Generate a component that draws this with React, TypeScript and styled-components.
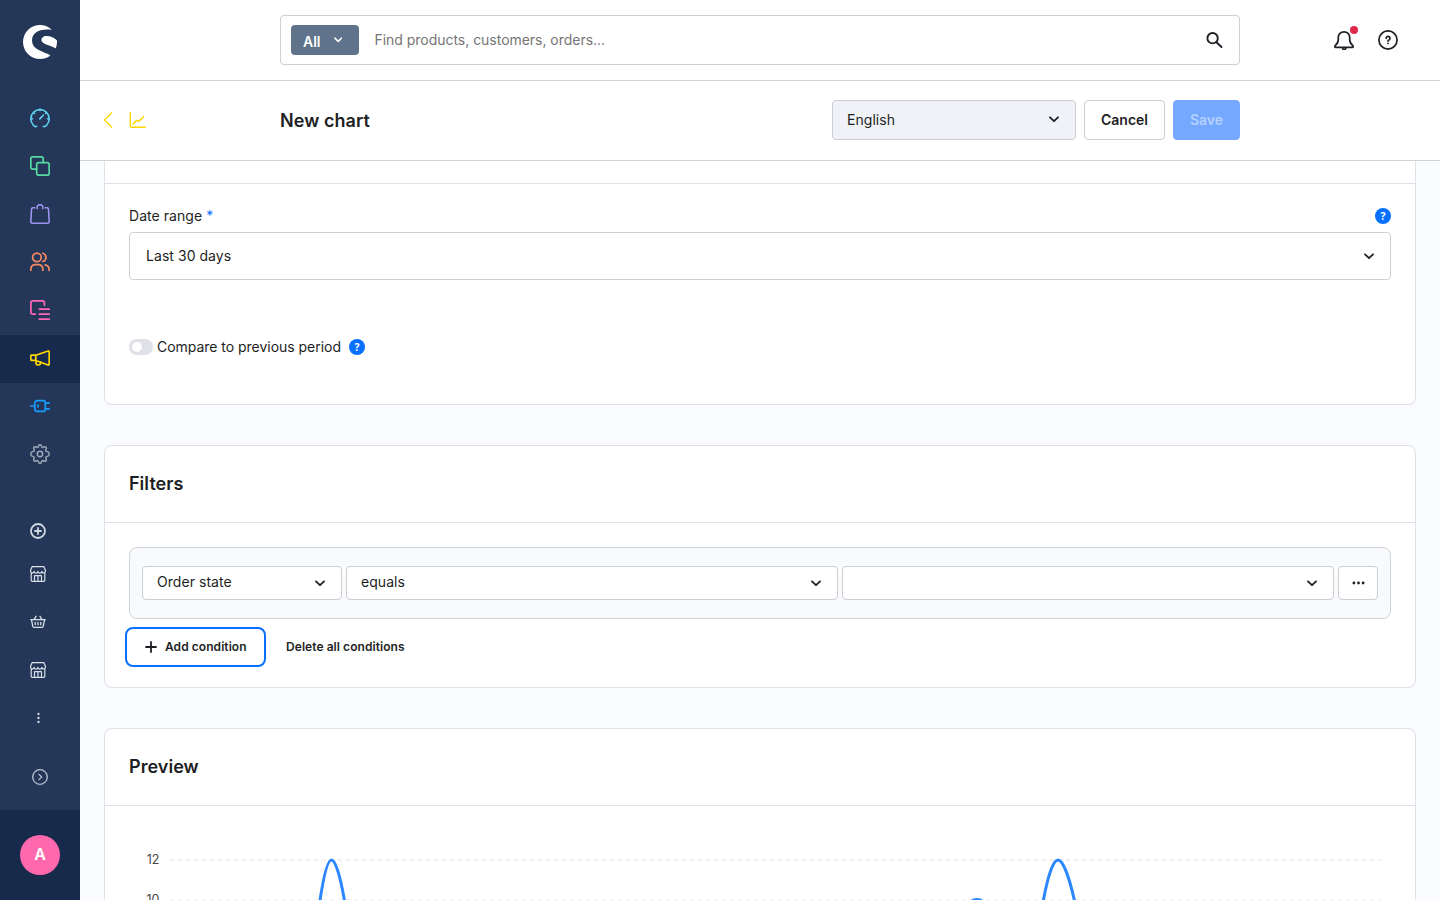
import React from "react";
import styled, { createGlobalStyle, css } from "styled-components";
import { SiShopware } from "react-icons/si";

const GlobalStyle = createGlobalStyle`
  *, *::before, *::after { box-sizing: border-box; }
  body { margin: 0; overflow: hidden; font-family: Inter, "Liberation Sans", sans-serif; color: #1e1f24; }
  button, input { font: inherit; color: inherit; }
  svg { display: block; flex: none; }
`;

const Layout = styled.div`
  display: flex;
  height: 900px;
  width: 1440px;
  background: #fafbff;
`;

const Sidebar = styled.aside`
  display: flex;
  flex-direction: column;
  width: 80px;
  height: 100%;
  background: #243758;
`;

const Logo = styled.div`
  display: flex;
  justify-content: center;
  height: 94px;
  padding-top: 25px;
  color: #fff;
`;

const NavList = styled.nav`
  display: flex;
  flex-direction: column;
  height: 427px;
  padding-top: 1px;
`;

const NavItem = styled.a<{ $color: string; $active?: boolean }>`
  display: flex;
  align-items: center;
  height: 48px;
  padding: 0 0 2px 30px;
  color: ${(p) => p.$color};
  background: ${(p) => (p.$active ? "#172a4c" : "transparent")};
`;

const ChannelList = styled.div`
  display: flex;
  flex-direction: column;
  height: 289px;
  padding-top: 2px;
`;

const ChannelHead = styled.div`
  height: 43px;
  padding-left: 30px;
  color: #d0d8e2;
`;

const Channel = styled.a`
  height: 48px;
  padding-left: 30px;
  color: #d9dfe8;
`;

const Collapse = styled.div`
  padding: 11px 0 0 32px;
  color: #b9c4d2;
`;

const UserArea = styled.div`
  display: flex;
  flex: 1;
  align-items: center;
  justify-content: center;
  background: #172a4c;
`;

const Avatar = styled.div`
  display: flex;
  align-items: center;
  justify-content: center;
  width: 40px;
  height: 40px;
  padding-bottom: 2px;
  border-radius: 50%;
  background: #ff68ac;
  color: #fff;
  font-size: 16px;
  font-weight: 600;
`;

const Main = styled.main`
  display: flex;
  flex: 1;
  flex-direction: column;
  min-width: 0;
`;

const TopBar = styled.header`
  display: flex;
  justify-content: space-between;
  height: 81px;
  padding: 15px 42px 0 200px;
  border-bottom: 1px solid #d1d1d8;
  background: #fff;
`;

const Search = styled.div`
  display: flex;
  align-items: center;
  width: 960px;
  height: 50px;
  padding: 0 16px 0 10px;
  border: 1px solid #cdced6;
  border-radius: 4px;
`;

const SearchType = styled.button`
  display: flex;
  align-items: center;
  justify-content: space-between;
  width: 68px;
  height: 30px;
  margin: 0 15.5px 0 0;
  padding: 0 17px 0 12px;
  border: 0;
  border-radius: 4px;
  background: #5f738b;
  color: #fff;
  font-size: 14px;
  font-weight: 600;
  & > span { padding-top: 2px; }
`;

const SearchInput = styled.input`
  flex: 1;
  padding: 0 0 2px;
  border: 0;
  outline: 0;
  background: none;
  font-size: 14px;
  letter-spacing: -0.03px;
  &::placeholder { color: #757575; opacity: 1; }
`;

const TopActions = styled.div`
  display: flex;
  gap: 24px;
  align-items: center;
  height: 50px;
`;

const Bell = styled.div`
  position: relative;
`;

const BellDot = styled.span`
  position: absolute;
  top: -4px;
  right: -4px;
  width: 8px;
  height: 8px;
  border-radius: 50%;
  background: #de294c;
`;

const PageHeader = styled.div`
  display: flex;
  align-items: center;
  height: 80px;
  padding: 0 200px 2px 23px;
  border-bottom: 1px solid #d1d1d8;
  background: #fff;
`;

const BackNav = styled.div`
  display: flex;
  width: 177px;
  gap: 16px;
  color: #ffd700;
`;

const PageTitle = styled.h1`
  flex: 1;
  margin: 0;
  padding-top: 2px;
  font-size: 18px;
  font-weight: 600;
  letter-spacing: 0.06px;
`;

const Button = styled.button<{ $width: number; $primary?: boolean }>`
  width: ${(p) => p.$width}px;
  height: 40px;
  margin-left: 8px;
  padding: 0;
  border: 1px solid #cdced6;
  border-radius: 4px;
  background: #fff;
  font-size: 14px;
  font-weight: 600;
  ${(p) => p.$primary && css`
    border-color: #75a8ff;
    background: #75a8ff;
    color: #b5d1ff;
  `}
`;

const SelectBox = styled.div<{ $width?: number; $height: number; $muted?: boolean; $inset?: number; $lift?: number }>`
  display: flex;
  align-items: center;
  justify-content: space-between;
  ${(p) => (p.$width ? css`width: ${p.$width}px;` : css`flex: 1;`)}
  height: ${(p) => p.$height}px;
  padding: 0 16px 0 ${(p) => p.$inset ?? 14}px;
  border: 1px solid #cdced6;
  border-radius: 4px;
  background: ${(p) => (p.$muted ? "#f0f2f8" : "#fff")};
  font-size: 14px;
  letter-spacing: 0.05px;
  & > span { padding-bottom: ${(p) => p.$lift ?? 0}px; }
`;

const Content = styled.div`
  display: flex;
  flex: 1;
  flex-direction: column;
  gap: 40px;
  min-height: 0;
  padding: 0 24px;
  overflow: hidden;
`;

const Card = styled.section<{ $height: number; $scrolled?: boolean }>`
  display: flex;
  flex: none;
  flex-direction: column;
  height: ${(p) => p.$height}px;
  border: 1px solid #e0e1e8;
  border-radius: 8px;
  background: #fff;
  ${(p) => p.$scrolled && css`
    border-top: 0;
    border-top-left-radius: 0;
    border-top-right-radius: 0;
  `}
`;

const CardHeader = styled.h2`
  height: 77px;
  margin: 0;
  padding: 26px 24px 0;
  border-bottom: 1px solid #e0e1e8;
  font-size: 18px;
  font-weight: 600;
  line-height: 24px;
  letter-spacing: 0.04px;
`;

const CardHeaderTail = styled.div`
  height: 23px;
  border-bottom: 1px solid #e0e1e8;
`;

const CardBody = styled.div`
  display: flex;
  flex-direction: column;
  padding: 24px 24px 0;
`;

const FieldHead = styled.div`
  display: flex;
  align-items: center;
  justify-content: space-between;
  height: 16px;
  margin-bottom: 8px;
  font-size: 14px;
`;

const FieldLabel = styled.span`
  padding-bottom: 1px;
  letter-spacing: 0.05px;
`;

const Required = styled.span`
  color: #0870ff;
`;

const Help = styled.span`
  display: flex;
  align-items: center;
  justify-content: center;
  width: 16px;
  height: 16px;
  border-radius: 50%;
  background: #0870ff;
  color: #fff;
  font-size: 10.5px;
  font-family: "Open Sans", sans-serif;
  font-weight: 700;
`;

const FieldRow = styled.div`
  display: flex;
`;

const SwitchRow = styled.div`
  display: flex;
  align-items: center;
  height: 16px;
  margin-top: 59px;
  font-size: 14px;
`;

const SwitchTrack = styled.span`
  display: flex;
  align-items: center;
  width: 24px;
  height: 16px;
  margin-right: 4px;
  padding-left: 3px;
  border-radius: 8px;
  background: #e0e1e8;
  &::before { content: ""; width: 10px; height: 10px; border-radius: 50%; background: #fff; }
`;

const SwitchLabel = styled.span`
  width: 184px;
  margin-right: 8px;
  padding-bottom: 1px;
  letter-spacing: -0.03px;
  white-space: nowrap;
`;

const ConditionBox = styled.div`
  display: flex;
  gap: 4px;
  align-items: center;
  height: 72px;
  padding: 0 12px;
  border: 1px solid #cfd3da;
  border-radius: 8px;
  background: #f9fafc;
`;

const MoreButton = styled.button`
  display: flex;
  align-items: center;
  justify-content: center;
  width: 40px;
  height: 34px;
  padding: 0;
  border: 1px solid #cdced6;
  border-radius: 4px;
  background: #fff;
`;

const ConditionActions = styled.div`
  display: flex;
  gap: 20px;
  margin: 8px 0 0 -4px;
`;

const TextButton = styled.button<{ $focused?: boolean }>`
  display: flex;
  align-items: center;
  gap: 8px;
  height: 40px;
  padding: 0;
  border: 0;
  border-radius: 8px;
  background: none;
  font-size: 12px;
  font-weight: 600;
  letter-spacing: 0.06px;
  & > span { padding-bottom: 1px; }
  ${(p) => p.$focused && css`
    width: 141px;
    padding-left: 18px;
    border: 2px solid #0870ff;
  `}
`;

const stroke = (w: number) => ({
  fill: "none",
  stroke: "currentColor",
  strokeWidth: w,
  strokeLinecap: "round" as const,
  strokeLinejoin: "round" as const,
});

const Icon = ({ size = 20, w = 1.6, children }: { size?: number; w?: number; children: React.ReactNode }) => (
  <svg width={size} height={size} viewBox={`0 0 ${size} ${size}`} {...stroke(w)}>{children}</svg>
);

const Chevron = ({ width = 10 }: { width?: number }) => (
  <svg width={width} height={width * 0.7} viewBox="0 0 10 7" {...stroke(1.8)}><path d="M1 1.3 5 5.2 9 1.3" /></svg>
);

const DashboardIcon = () => (
  <Icon>
    <path d="M6.600 18.300c-.9.600-2.200 0-3.200-1.100A9.200 9.200 0 1 1 16.600 17.200c-1 1.100-2.300 1.700-3.200 1.100" />
    <path d="M9.800 10.900 13.300 7.200M10 1v1.400M1 10.700h1.500M17.500 10.700H19M4 4.900l.6.600M15.400 5.500l.6-.6" />
  </Icon>
);
const CatalogueIcon = () => (
  <Icon w={1.7}>
    <path d="M6.500 13.200H2.800a2 2 0 0 1-2-2V2.800a2 2 0 0 1 2-2h8.400a2 2 0 0 1 2 2v3.700" />
    <rect x="6.700" y="6.700" width="12.500" height="12.500" rx="2" />
  </Icon>
);
const BagIcon = () => (
  <Icon w={1.6}>
    <path d="M4.800 3.800H3a1.500 1.500 0 0 0-1.500 1.400L.8 17.600a1.500 1.500 0 0 0 1.500 1.600h15.400a1.500 1.500 0 0 0 1.500-1.600L18.500 5.200A1.500 1.500 0 0 0 17 3.800h-1.800" />
    <path d="M7.200 4.600V3A2 2 0 0 1 9.200.9h1.600A2 2 0 0 1 12.800 3v1.600" />
  </Icon>
);
const UsersIcon = () => (
  <Icon w={1.7}>
    <circle cx="6.900" cy="5.400" r="4.300" />
    <path d="M.9 18.300v-1.600a4 4 0 0 1 4.100-4h3.700a4 4 0 0 1 4.100 4v1.600M12.900 1.300a4.300 4.300 0 0 1 0 8.200M15.200 12.900a4.800 4.800 0 0 1 3.900 4.500v.9" />
  </Icon>
);
const ContentIcon = () => (
  <Icon w={1.7}>
    <path d="M5.200 14.200H2.700A1.800 1.800 0 0 1 .9 12.400V2.700A1.800 1.800 0 0 1 2.700.9h9.900a1.800 1.800 0 0 1 1.800 1.800v2.500M9.300 9.200h10M9.300 14.200h10M9.300 19.100h10" />
  </Icon>
);
const MegaphoneIcon = () => (
  <Icon w={1.7}>
    <path d="M1.600 7.200h4.200v5.200H1.600a.8.800 0 0 1-.8-.8V8a.8.800 0 0 1 .8-.8zM5.800 7.200 18.100 3a.8.800 0 0 1 1.100.8v12.400a.8.800 0 0 1-1.100.8L5.800 12.500" />
    <path d="M6 12.700v1.900a2.300 2.300 0 0 0 4.600.2v-.6" />
  </Icon>
);
const PlugIcon = () => (
  <Icon w={1.7}>
    <path d="M.9 10h3.800M7.400 4.700h5.900a2 2 0 0 1 2 2v6.600a2 2 0 0 1-2 2H7.400a2.600 2.600 0 0 1-2.600-2.600V7.300a2.600 2.600 0 0 1 2.600-2.600zM15.500 7.200h3.700M15.500 12.800h3.700M8 9.200v1.600" />
  </Icon>
);
const GearIcon = () => (
  <Icon w={1.5}>
    <circle cx="10" cy="10" r="2.700" />
    <path d="M8.700 1.500c.3-1 2.300-1 2.600 0l.4 1.200c.2.700 1 1 1.700.6l1.100-.5c1-.5 2.300.9 1.800 1.800l-.5 1.100c-.3.700 0 1.500.7 1.700l1.900.7c1 .4 1 3.400 0 3.800l-1.900.7c-.7.200-1 1-.7 1.700l.5 1.100c.5 1-.9 2.300-1.800 1.800l-1.100-.5c-.7-.3-1.500 0-1.700.6l-.4 1.200c-.3 1-2.300 1-2.600 0l-.4-1.200c-.2-.7-1-1-1.700-.6l-1.100.5c-1 .5-2.300-.9-1.800-1.800l.5-1.100c.3-.7 0-1.500-.7-1.700l-1.900-.7c-1-.4-1-3.400 0-3.800l1.900-.7c.7-.2 1-1 .7-1.700l-.5-1.100c-.5-1 .9-2.300 1.800-1.800l1.100.5c.7.300 1.500 0 1.700-.6z" />
  </Icon>
);
const PlusCircleIcon = () => (
  <Icon size={16} w={1.8}><circle cx="8" cy="8" r="7" /><path d="M8 5v6M5 8h6" /></Icon>
);
const StoreIcon = () => (
  <Icon size={16} w={1.2}>
    <path d="M2.200.6h11.600l1.600 3.700V5a1.800 1.800 0 0 1-3.600.3 1.900 1.900 0 0 1-3.800 0 1.900 1.900 0 0 1-3.800 0A1.800 1.800 0 0 1 .6 5v-.7zM1.200 6.500v7.800c0 .6.500 1.100 1.100 1.100h11.400c.6 0 1.100-.5 1.100-1.100V6.500M4.500 15.200V9.700h7v5.500M8 9.700v5.500" />
  </Icon>
);
const BasketIcon = () => (
  <Icon size={16} w={1.3}>
    <path d="M.7 5.600h14.600M1.500 5.800l1.300 6.700c.1.600.5.900 1.100.9h8.200c.6 0 1-.3 1.100-.9l1.300-6.700M4.200 5.400 6 2.300M11.800 5.400 10 2.300M5.200 8.300v2.400M8 8.300v2.400M10.800 8.300v2.400" />
  </Icon>
);
const DotsIcon = ({ vertical }: { vertical?: boolean }) => (
  <svg width="16" height="16" viewBox="0 0 16 16" fill="currentColor">
    {[-1, 0, 1].map((i) => (
      <circle key={i} cx={vertical ? 8.5 : 8.5 + i * 4.6} cy={vertical ? 8 + i * 4 : 8} r={vertical ? 1.15 : 1.4} />
    ))}
  </svg>
);
const CollapseIcon = () => (
  <Icon size={16} w={1.3}><circle cx="8" cy="8" r="7.300" /><path d="m7 5.400 2.700 2.600L7 10.600" /></Icon>
);
const SearchIcon = () => (
  <Icon size={17} w={1.9}><circle cx="6.600" cy="6.200" r="5.200" /><path d="m10.500 10.200 5 4.800" /></Icon>
);
const BellIcon = () => (
  <Icon w={1.7}>
    <path d="M4.300 7.500a5.700 5.700 0 0 1 11.400 0v1.700c0 3.400 1 4.700 2.900 6.200.9.800.7 2-.5 2H1.900c-1.200 0-1.400-1.200-.5-2 1.900-1.500 2.900-2.800 2.900-6.200zM8.700 18.800c.7.900 2.300.9 3 0" />
  </Icon>
);
const HelpIcon = () => (
  <Icon w={1.7}>
    <circle cx="10" cy="10" r="9.100" />
    <path d="M8.200 8.300a1.900 1.900 0 1 1 2.800 1.600c-.6.300-1 .6-1 1.200M10 13.400v.1" />
  </Icon>
);
const BackIcon = () => (
  <svg width="10" height="16" viewBox="0 0 10 16" {...stroke(1.4)}><path d="M8.700.8 1.500 8l7.200 7.200" /></svg>
);
const ChartIcon = () => (
  <svg width="18" height="16" viewBox="0 0 18 16" {...stroke(1.4)}>
    <path d="M1.300.7v13a1.500 1.500 0 0 0 1.500 1.500h13.500M4 12.200l3.300-3.700 2.700.700L14.700 4.500" />
  </svg>
);
const PlusIcon = () => (
  <svg width="12" height="12" viewBox="0 0 12 12" {...stroke(1.8)}><path d="M6 1v10M1 6h10" /></svg>
);

const navItems = [
  { color: "#5fd0ee", icon: <DashboardIcon /> },
  { color: "#57d9a3", icon: <CatalogueIcon /> },
  { color: "#a092f0", icon: <BagIcon /> },
  { color: "#f88962", icon: <UsersIcon /> },
  { color: "#ff68b4", icon: <ContentIcon /> },
  { color: "#ffd700", icon: <MegaphoneIcon />, active: true },
  { color: "#189eff", icon: <PlugIcon /> },
  { color: "#9aa8b5", icon: <GearIcon /> },
];

const Axis = styled.text`
  font-size: 12.5px;
  fill: #45494d;
  text-anchor: end;
`;

const PreviewChart = () => (
  <svg width="1262" height="90" viewBox="129 830 1262 90">
    <g stroke="#f0f0f0" strokeWidth="2" strokeDasharray="4 4">
      <path d="M170 860H1381M170 900H1381" />
    </g>
    <Axis x="159.500" y="864">12</Axis>
    <Axis x="159.500" y="903.500">10</Axis>
    <g fill="none" stroke="#2b87ff" strokeWidth="3">
      <path d="M319.600 903C323 880 327 860 331.500 860S341 880 344.900 903" />
      <path d="M967 905Q977 894 987 905" />
      <path d="M1042.900 903C1047 880 1052.500 860 1058 860S1070 880 1075 903" />
    </g>
  </svg>
);

export default function App() {
  return (
    <Layout>
      <GlobalStyle />
      <Sidebar>
        <Logo><SiShopware size={34} /></Logo>
        <NavList>
          {navItems.map((item) => (
            <NavItem key={item.color} $color={item.color} $active={item.active}>{item.icon}</NavItem>
          ))}
        </NavList>
        <ChannelList>
          <ChannelHead><PlusCircleIcon /></ChannelHead>
          <Channel><StoreIcon /></Channel>
          <Channel><BasketIcon /></Channel>
          <Channel><StoreIcon /></Channel>
          <Channel><DotsIcon vertical /></Channel>
          <Collapse><CollapseIcon /></Collapse>
        </ChannelList>
        <UserArea><Avatar>A</Avatar></UserArea>
      </Sidebar>
      <Main>
        <TopBar>
          <Search>
            <SearchType><span>All</span><Chevron width={8.5} /></SearchType>
            <SearchInput placeholder="Find products, customers, orders..." />
            <SearchIcon />
          </Search>
          <TopActions>
            <Bell><BellIcon /><BellDot /></Bell>
            <HelpIcon />
          </TopActions>
        </TopBar>
        <PageHeader>
          <BackNav><BackIcon /><ChartIcon /></BackNav>
          <PageTitle>New chart</PageTitle>
          <SelectBox $width={244} $height={40} $muted><span>English</span><Chevron /></SelectBox>
          <Button $width={81}>Cancel</Button>
          <Button $width={67} $primary disabled>Save</Button>
        </PageHeader>
        <Content>
          <Card $height={244} $scrolled>
            <CardHeaderTail />
            <CardBody>
              <FieldHead>
                <FieldLabel>Date range <Required>*</Required></FieldLabel>
                <Help>?</Help>
              </FieldHead>
              <FieldRow>
                <SelectBox $height={48} $inset={16} $lift={1}><span>Last 30 days</span><Chevron /></SelectBox>
              </FieldRow>
              <SwitchRow>
                <SwitchTrack />
                <SwitchLabel>Compare to previous period</SwitchLabel>
                <Help>?</Help>
              </SwitchRow>
            </CardBody>
          </Card>
          <Card $height={243}>
            <CardHeader>Filters</CardHeader>
            <CardBody>
              <ConditionBox>
                <SelectBox $width={200} $height={34} $lift={3}><span>Order state</span><Chevron /></SelectBox>
                <SelectBox $height={34} $lift={3}><span>equals</span><Chevron /></SelectBox>
                <SelectBox $height={34}><span /><Chevron /></SelectBox>
                <MoreButton><DotsIcon /></MoreButton>
              </ConditionBox>
              <ConditionActions>
                <TextButton $focused><PlusIcon /><span>Add condition</span></TextButton>
                <TextButton><span>Delete all conditions</span></TextButton>
              </ConditionActions>
            </CardBody>
          </Card>
          <Card $height={500}>
            <CardHeader>Preview</CardHeader>
            <CardBody><PreviewChart /></CardBody>
          </Card>
        </Content>
      </Main>
    </Layout>
  );
}
